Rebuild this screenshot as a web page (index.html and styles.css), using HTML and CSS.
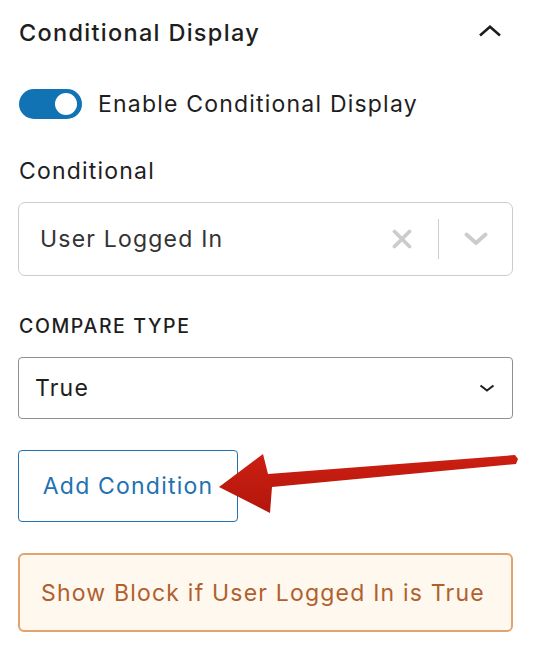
FILE: index.html
```html
<!DOCTYPE html>
<html>
<head>
<meta charset="utf-8">
<link rel="stylesheet" href="styles.css">
</head>
<body>
<div class="panel">
  <div class="header">
    <h2 class="title">Conditional Display</h2>
    <svg class="chev-up" width="24" height="12" viewBox="0 0 24 12"><path d="M2 10.5 L12 1.8 L22 10.5" fill="none" stroke="#1e1e1e" stroke-width="2.6"/></svg>
  </div>
  <div class="toggle-row">
    <span class="toggle"><span class="knob"></span></span>
    <span class="toggle-label">Enable Conditional Display</span>
  </div>
  <div class="label">Conditional</div>
  <div class="rselect">
    <span class="rselect-value">User Logged In</span>
    <span class="indicators">
      <svg class="ind-x" width="20" height="20" viewBox="0 0 20 20"><path d="M2.5 2.5 L17.5 17.5 M17.5 2.5 L2.5 17.5" stroke="#cccccc" stroke-width="3.8" stroke-linecap="round"/></svg>
      <span class="sep"></span>
      <svg class="ind-chev" width="24" height="14" viewBox="0 0 24 14"><path d="M2.5 2.5 L12 11 L21.5 2.5" fill="none" stroke="#cccccc" stroke-width="3.8" stroke-linecap="round" stroke-linejoin="round"/></svg>
    </span>
  </div>
  <div class="label-upper">Compare Type</div>
  <div class="nselect">
    <span>True</span>
    <svg class="nchev" width="16" height="8" viewBox="0 0 16 8"><path d="M1.5 1.5 L8 6.5 L14.5 1.5" fill="none" stroke="#1e1e1e" stroke-width="2"/></svg>
  </div>
  <button class="btn">Add Condition</button>
  <div class="notice">Show Block if User Logged In is True</div>
</div>
<svg class="arrow" width="533" height="652" viewBox="0 0 533 652">
  <defs>
    <linearGradient id="ag" x1="0" y1="0" x2="0" y2="1">
      <stop offset="0" stop-color="#cc1f12"/>
      <stop offset="1" stop-color="#b3160c"/>
    </linearGradient>
  </defs>
  <polygon points="219,487 263,454 268,474 515,455 518,459 516,464 272,487 270,513" fill="url(#ag)"/>
</svg>
</body>
</html>
```
FILE: styles.css
```css
html, body {
  margin: 0;
  padding: 0;
  background: #ffffff;
}
body {
  font-family: "Inter", "Noto Sans", sans-serif;
  font-size: 23px;
  letter-spacing: 1.2px;
  color: #1e1e1e;
  width: 533px;
  height: 652px;
  overflow: hidden;
  position: relative;
}
.panel {
  padding: 0 20px 0 18px;
  display: flex;
  flex-direction: column;
}
.header {
  display: flex;
  align-items: center;
  justify-content: space-between;
  height: 32px;
  margin-top: 16px;
}
.title {
  margin: 0 0 0 1px;
  font-size: 23.5px;
  font-weight: 500;
  letter-spacing: 1.3px;
}
.chev-up {
  margin-right: 11px;
  margin-top: -2px;
}
.toggle-row {
  display: flex;
  align-items: center;
  gap: 16px;
  margin-top: 40px;
  height: 32px;
}
.toggle {
  width: 63px;
  height: 30px;
  border-radius: 15px;
  background: #1273b4;
  display: flex;
  align-items: center;
  justify-content: flex-end;
  padding-right: 5px;
  box-sizing: border-box;
  margin-left: 1px;
}
.knob {
  width: 22px;
  height: 22px;
  border-radius: 50%;
  background: #ffffff;
}
.label {
  margin-top: 35px;
  margin-left: 1px;
  height: 32px;
  line-height: 32px;
}
.rselect {
  margin-top: 15px;
  height: 74px;
  box-sizing: border-box;
  border: 1.5px solid #cccccc;
  border-radius: 7px;
  display: flex;
  align-items: center;
  justify-content: space-between;
  padding-left: 21px;
  padding-right: 24px;
}
.rselect-value {
  color: #333333;
}
.indicators {
  display: flex;
  align-items: center;
}
.ind-x {
  width: 20px;
  height: 20px;
}
.sep {
  width: 1.5px;
  height: 40px;
  background: #cccccc;
  margin: 0 25px 0 26px;
}
.label-upper {
  margin-top: 36px;
  margin-left: 1px;
  font-size: 19.5px;
  letter-spacing: 1.6px;
  font-weight: 500;
  text-transform: uppercase;
  height: 28px;
  line-height: 28px;
}
.nselect {
  margin-top: 17px;
  height: 62px;
  box-sizing: border-box;
  border: 1.5px solid #8c8f94;
  border-radius: 4px;
  display: flex;
  align-items: center;
  justify-content: space-between;
  padding-left: 16px;
  padding-right: 17px;
}
.btn {
  align-self: flex-start;
  margin-top: 31px;
  width: 220px;
  height: 72px;
  box-sizing: border-box;
  border: 1.5px solid #2271b1;
  border-radius: 4px;
  background: #ffffff;
  color: #2271b1;
  font-family: inherit;
  font-size: inherit;
  letter-spacing: inherit;
  padding: 0;
}
.notice {
  margin-top: 31px;
  height: 79px;
  box-sizing: border-box;
  border: 2px solid #e2a36c;
  border-radius: 6px;
  background: #fef8ee;
  color: #b25f2e;
  display: flex;
  align-items: center;
  padding-left: 21px;
}
.arrow {
  position: absolute;
  left: 0;
  top: 0;
  pointer-events: none;
}
```
